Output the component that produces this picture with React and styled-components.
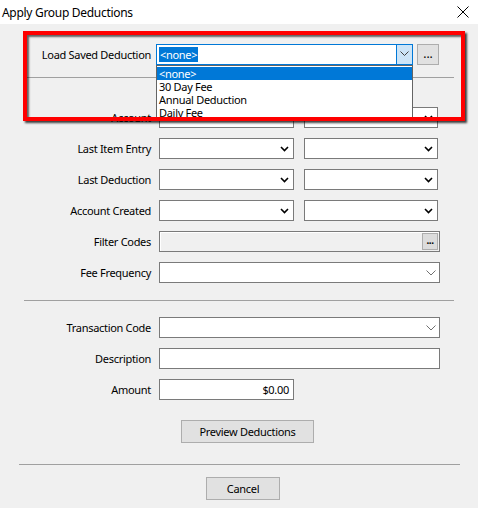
import React from "react"
import styled, { createGlobalStyle } from "styled-components"

const GlobalStyle = createGlobalStyle`
    html, body {
        margin: 0;
        padding: 0;
        background: #f0f0f0;
    }
    * {
        box-sizing: border-box;
        font-family: "Noto Sans", "Open Sans", sans-serif;
    }
`

const Window = styled.div`
    position: relative;
    width: 478px;
    height: 508px;
    background: #f0f0f0;
    font-size: 11px;
    letter-spacing: -0.3px;
    color: #000;
    overflow: hidden;
`

const TitleBar = styled.div`
    height: 24px;
    background: #fff;
    display: flex;
    align-items: center;
    justify-content: space-between;
    padding: 0 9px 0 2px;
    font-size: 12px;
`

const Body = styled.div`
    display: flex;
    flex-direction: column;
`

const LoadRow = styled.div`
    display: flex;
    align-items: center;
    margin-top: 20px;
    height: 21px;
`

const Label = styled.div`
    width: 151px;
    text-align: right;
    white-space: nowrap;
    line-height: 21px;
`

const Separator = styled.div`
    height: 1px;
    background: #a0a0a0;
    margin-top: ${p => p.top}px;
    margin-left: ${p => p.left}px;
    width: ${p => p.width}px;
`

const Group = styled.div`
    display: flex;
    flex-direction: column;
    gap: 10px;
    margin-top: ${p => p.top}px;
`

const Row = styled.div`
    display: grid;
    grid-template-columns: ${p => p.split ? '151px 135px 136px' : p.narrow ? '151px 135px' : '151px 281px'};
    column-gap: 8px;
    align-items: center;
    height: 21px;

    & > :nth-child(3) {
        margin-left: 2px;
    }
`

const Field = styled.div`
    position: relative;
    height: 21px;
    border: 1px solid #7a7a7a;
    background: ${p => p.disabled ? '#f0f0f0' : '#fff'};
    box-shadow: ${p => p.disabled ? 'inset 1px 1px 0 #fff' : 'none'};
    display: flex;
    align-items: center;
    justify-content: ${p => p.right ? 'flex-end' : 'space-between'};
    padding: 0 ${p => p.disabled ? 1 : 4}px 0 2px;
`

const Combo = styled(Field)`
    justify-content: flex-end;
    padding-right: ${p => p.light ? '3px' : '4px'};
`

const ComboFocus = styled.div`
    position: relative;
    width: 257px;
    height: 21px;
    margin-left: 5px;
    border: 1px solid #0078d7;
    background: #fff;
    display: flex;
    align-items: center;
    padding-left: 2px;
`

const Selected = styled.span`
    background: #0078d7;
    color: #fff;
    line-height: 15px;
    padding: 0 1px;
`

const DropButton = styled.div`
    margin-left: auto;
    width: 17px;
    height: 21px;
    margin-top: -1px;
    margin-right: -1px;
    border: 1px solid #0078d7;
    background: #cce4f7;
    display: flex;
    align-items: center;
    justify-content: center;
`

const List = styled.div`
    position: absolute;
    left: -1px;
    top: 20px;
    width: 257px;
    border: 1px solid #646464;
    background: #fff;
    padding: 1px 0;
    z-index: 2;
`

const ListItem = styled.div`
    height: 13px;
    line-height: 13px;
    padding-left: 2px;
    background: ${p => p.active ? '#0078d7' : 'transparent'};
    color: ${p => p.active ? '#fff' : '#000'};
    white-space: nowrap;
`

const EllipsisButton = styled.div`
    width: ${p => p.small ? 16 : 22}px;
    height: ${p => p.small ? 17 : 21}px;
    margin-left: ${p => p.small ? 0 : 4}px;
    background: ${p => p.small ? '#dcdcdc' : '#e1e1e1'};
    border: 1px solid #adadad;
    display: flex;
    align-items: center;
    justify-content: center;
    font-size: ${p => p.small ? 10 : 12}px;
    font-weight: ${p => p.small ? 700 : 400};
    letter-spacing: ${p => p.small ? -0.5 : 0}px;
    line-height: 1;
    padding-bottom: ${p => p.small ? 3 : 2}px;
`

const ButtonRow = styled.div`
    margin-top: ${p => p.top}px;
    padding-left: ${p => p.left}px;
    display: flex;
`

const Button = styled.div`
    width: ${p => p.width}px;
    height: 23px;
    background: #e1e1e1;
    border: 1px solid #adadad;
    display: flex;
    align-items: center;
    justify-content: center;
`

const Highlight = styled.div`
    position: absolute;
    left: 23px;
    top: 31px;
    width: 442px;
    height: 90px;
    border: 4px solid #ff0000;
    box-shadow: 2px 2px 2px rgba(0, 0, 0, 0.75), inset 2px 2px 2px rgba(0, 0, 0, 0.6);
    z-index: 3;
    pointer-events: none;
`

function Chevron({ variant }) {
    if (variant === 'dark') {
        return (
            <svg width="9" height="6" viewBox="0 0 9 6">
                <path d="M1 1 L4.5 4.5 L8 1" fill="none" stroke="#000" strokeWidth="1.6" />
            </svg>
        )
    }
    if (variant === 'light') {
        return (
            <svg width="10" height="6" viewBox="0 0 10 6">
                <path d="M0.5 0.5 L5 5 L9.5 0.5" fill="none" stroke="#707070" strokeWidth="1" />
            </svg>
        )
    }
    return (
        <svg width="9" height="6" viewBox="0 0 9 6">
            <path d="M0.5 0.5 L4.5 4.5 L8.5 0.5" fill="none" stroke="#404040" strokeWidth="1" />
        </svg>
    )
}

function CloseIcon() {
    return (
        <svg width="12" height="12" viewBox="0 0 12 12">
            <path d="M0.5 0.5 L11.5 11.5 M11.5 0.5 L0.5 11.5" stroke="#000" strokeWidth="1" />
        </svg>
    )
}

const savedDeductions = ['<none>', '30 Day Fee', 'Annual Deduction', 'Daily Fee']

export default function App() {
    return (
        <Window>
            <GlobalStyle />
            <TitleBar>
                <span>Apply Group Deductions</span>
                <CloseIcon />
            </TitleBar>
            <Body>
                <LoadRow>
                    <Label>Load Saved Deduction</Label>
                    <ComboFocus>
                        <Selected>&lt;none&gt;</Selected>
                        <DropButton><Chevron /></DropButton>
                        <List>
                            {savedDeductions.map((item, i) => (
                                <ListItem key={item} active={i === 0}>{item}</ListItem>
                            ))}
                        </List>
                    </ComboFocus>
                    <EllipsisButton>...</EllipsisButton>
                </LoadRow>

                <Separator top={12} left={24} width={430} />

                <Group top={29}>
                    {['Account', 'Last Item Entry', 'Last Deduction', 'Account Created'].map(label => (
                        <Row split key={label}>
                            <Label>{label}</Label>
                            <Combo><Chevron variant="dark" /></Combo>
                            <Combo><Chevron variant="dark" /></Combo>
                        </Row>
                    ))}
                    <Row>
                        <Label>Filter Codes</Label>
                        <Field disabled right>
                            <EllipsisButton small>...</EllipsisButton>
                        </Field>
                    </Row>
                    <Row>
                        <Label>Fee Frequency</Label>
                        <Combo light><Chevron variant="light" /></Combo>
                    </Row>
                </Group>

                <Separator top={17} left={24} width={430} />

                <Group top={16}>
                    <Row>
                        <Label>Transaction Code</Label>
                        <Combo light><Chevron variant="light" /></Combo>
                    </Row>
                    <Row>
                        <Label>Description</Label>
                        <Field />
                    </Row>
                    <Row narrow>
                        <Label>Amount</Label>
                        <Field right>$0.00</Field>
                    </Row>
                </Group>

                <ButtonRow top={20} left={181}>
                    <Button width={133}>Preview Deductions</Button>
                </ButtonRow>

                <Separator top={21} left={19} width={441} />

                <ButtonRow top={12} left={206}>
                    <Button width={74}>Cancel</Button>
                </ButtonRow>
            </Body>
            <Highlight />
        </Window>
    )
}
